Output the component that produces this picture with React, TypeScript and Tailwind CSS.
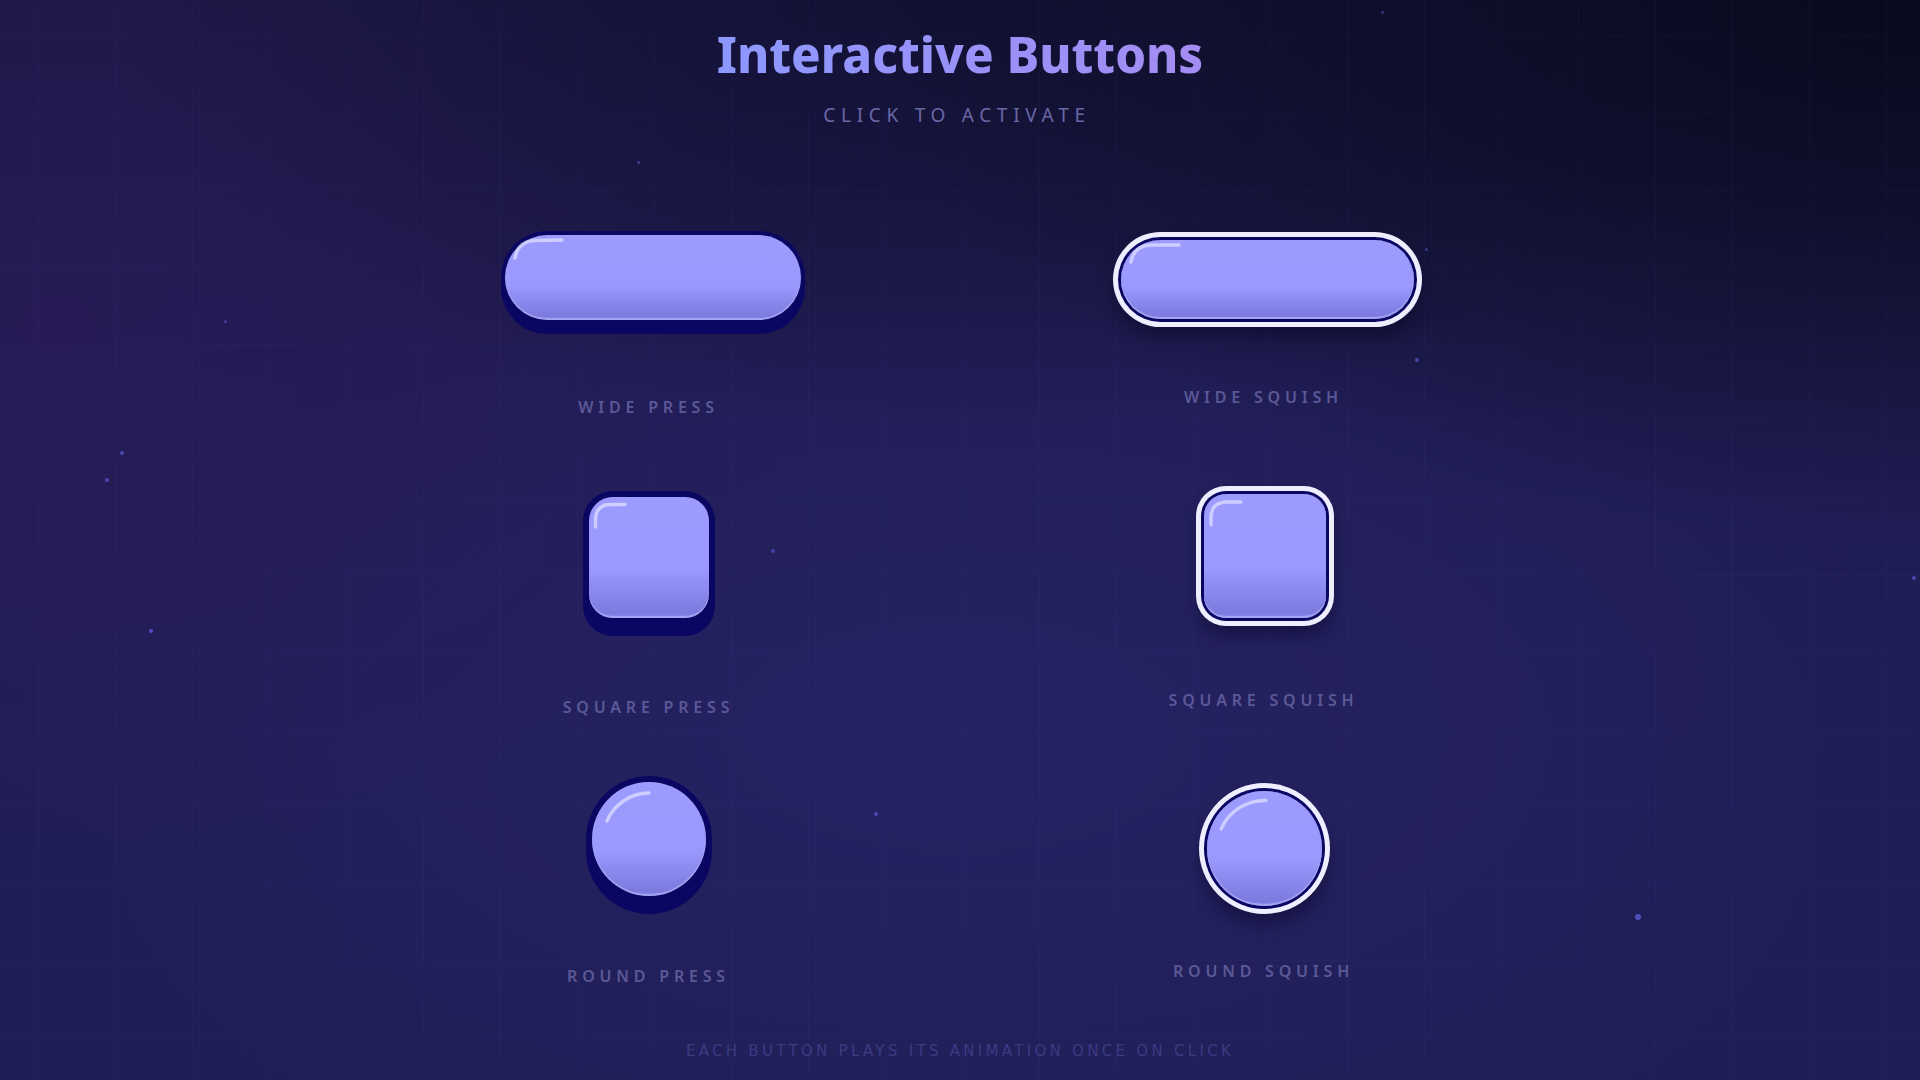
import React from "react";

type Cell = {
  label: string;
  face: string;
  shadow: string;
  top: string;
  gap: string;
  shift: string;
  w: number;
  h: number;
  arc: string;
};

// Glossy face fill shared by every button
const FACE =
  "bg-[linear-gradient(180deg,#9c9cff_0%,#9999fe_60%,#8887eb_80%,#7b7adf_96%,#8e8df0_100%)]";

const cells: Cell[] = [
  {
    label: "WIDE PRESS",
    face: "w-[296px] h-[85px] rounded-full",
    shadow:
      "shadow-[inset_0_-2px_0_rgba(200,200,255,0.45),0_0_0_4px_#0a0763,0_10px_0_4px_#0a0763]",
    top: "mt-[36px]",
    gap: "mt-[79px]",
    shift: "",
    w: 296,
    h: 85,
    arc: "M10 23 Q13 6 30 5.5 L57 5",
  },
  {
    label: "WIDE SQUISH",
    face: "w-[293px] h-[79px] rounded-full",
    shadow:
      "shadow-[inset_0_-2px_0_rgba(200,200,255,0.45),0_0_0_3px_#0a0763,0_0_0_8px_#eeeeff,0_12px_16px_6px_rgba(6,6,35,0.45)]",
    top: "mt-[41px]",
    gap: "mt-[70px]",
    shift: "",
    w: 293,
    h: 79,
    arc: "M10 22 Q13 5.5 30 5 L58 5",
  },
  {
    label: "SQUARE PRESS",
    face: "w-[120px] h-[121px] rounded-[24px]",
    shadow:
      "shadow-[inset_0_-2px_0_rgba(200,200,255,0.45),0_0_0_6px_#0a0763,0_12px_0_6px_#0a0763]",
    top: "mt-[38px]",
    gap: "mt-[81px]",
    shift: "mr-[8px]",
    w: 120,
    h: 121,
    arc: "M6.5 30 L6.5 23 Q6.5 7.5 22 7.5 L36 7.5",
  },
  {
    label: "SQUARE SQUISH",
    face: "w-[122px] h-[124px] rounded-[22px]",
    shadow:
      "shadow-[inset_0_-2px_0_rgba(200,200,255,0.45),0_0_0_3px_#0a0763,0_0_0_8px_#eeeeff,0_12px_16px_6px_rgba(6,6,35,0.45)]",
    top: "mt-[35px]",
    gap: "mt-[74px]",
    shift: "mr-[5px]",
    w: 122,
    h: 124,
    arc: "M7 31 L7 24 Q7 8 23 8 L37 8",
  },
  {
    label: "ROUND PRESS",
    face: "w-[114px] h-[114px] rounded-full",
    shadow:
      "shadow-[inset_0_-2px_0_rgba(200,200,255,0.45),0_0_0_6px_#0a0763,0_12px_0_6px_#0a0763]",
    top: "mt-[43px]",
    gap: "mt-[72px]",
    shift: "mr-[8px]",
    w: 114,
    h: 114,
    arc: "M15 39 A46 46 0 0 1 57 11",
  },
  {
    label: "ROUND SQUISH",
    face: "w-[115px] h-[115px] rounded-full",
    shadow:
      "shadow-[inset_0_-2px_0_rgba(200,200,255,0.45),0_0_0_3px_#0a0763,0_0_0_8px_#eeeeff,0_12px_16px_6px_rgba(6,6,35,0.45)]",
    top: "mt-[52px]",
    gap: "mt-[57px]",
    shift: "mr-[7px]",
    w: 115,
    h: 115,
    arc: "M14 38 A48 48 0 0 1 59 9.5",
  },
];

// Faint dots scattered over the backdrop
const stars = [
  "left-[637px] top-[161px] w-[3px] h-[3px] opacity-60",
  "left-[224px] top-[320px] w-[3px] h-[3px] opacity-60",
  "left-[120px] top-[451px] w-[4px] h-[4px] opacity-70",
  "left-[105px] top-[478px] w-[4px] h-[4px] opacity-70",
  "left-[149px] top-[629px] w-[4px] h-[4px] opacity-80",
  "left-[771px] top-[549px] w-[4px] h-[4px] opacity-60",
  "left-[874px] top-[812px] w-[4px] h-[4px] opacity-70",
  "left-[1415px] top-[358px] w-[4px] h-[4px] opacity-70",
  "left-[1425px] top-[248px] w-[3px] h-[3px] opacity-50",
  "left-[1912px] top-[576px] w-[4px] h-[4px] opacity-70",
  "left-[1635px] top-[914px] w-[6px] h-[6px] opacity-80",
  "left-[1381px] top-[11px] w-[3px] h-[3px] opacity-50",
];

function GlossButton({ c }: { c: Cell }) {
  return (
    <button
      type="button"
      className={`relative block ${c.top} ${c.shift} ${c.face} ${c.shadow} ${FACE} cursor-pointer outline-none`}
    >
      <svg
        className="pointer-events-none absolute left-0 top-0 overflow-visible"
        width={c.w}
        height={c.h}
        viewBox={`0 0 ${c.w} ${c.h}`}
        fill="none"
      >
        <path
          d={c.arc}
          stroke="rgba(255,255,255,0.5)"
          strokeWidth={3.4}
          strokeLinecap="round"
        />
      </svg>
    </button>
  );
}

export default function App() {
  return (
    <div className="relative h-[1080px] w-full overflow-hidden bg-[radial-gradient(55%_50%_at_100%_0%,#070a1c_0%,rgba(7,10,28,0.6)_45%,transparent_100%),radial-gradient(45%_40%_at_50%_0%,rgba(10,10,35,0.55),transparent),radial-gradient(40%_50%_at_3%_30%,rgba(48,26,88,0.5),transparent),radial-gradient(50%_45%_at_50%_68%,rgba(42,38,110,0.55),transparent),linear-gradient(180deg,#1b1846_0%,#201d55_40%,#201e56_100%)] font-['Noto_Sans',sans-serif]">
      {/* fine grid over the backdrop */}
      <div className="pointer-events-none absolute inset-0 bg-[linear-gradient(rgba(130,130,255,0.035)_1px,transparent_1px),linear-gradient(90deg,rgba(130,130,255,0.035)_1px,transparent_1px)] bg-[size:77px_77px] bg-[position:38px_36px]" />
      {stars.map((s, i) => (
        <span
          key={i}
          className={`pointer-events-none absolute rounded-full bg-[#5a5ad6] blur-[0.6px] ${s}`}
        />
      ))}

      <div className="relative flex flex-col items-center pt-[30px]">
        <h1 className="bg-[linear-gradient(90deg,#8c98ff,#a48cf2)] bg-clip-text text-[49px] font-extrabold leading-none text-transparent">
          Interactive Buttons
        </h1>
        <p className="mt-[27px] mr-[6px] text-[19px] leading-none tracking-[0.3em] text-[#6b67a6]">
          CLICK TO ACTIVATE
        </p>

        <div className="mt-[74px] grid grid-cols-[300px_300px] grid-rows-[260px_280px_300px] items-start justify-center gap-x-[315px]">
          {cells.map((c) => (
            <div key={c.label} className="flex flex-col items-center">
              <GlossButton c={c} />
              <span
                className={`${c.gap} mr-[8px] text-[16px] font-semibold leading-none tracking-[0.3em] text-[#5b5897]`}
              >
                {c.label}
              </span>
            </div>
          ))}
        </div>

        <p className="mt-[5px] font-['DejaVu_Sans',sans-serif] text-[15px] leading-none tracking-[0.22em] text-[#3c3a82]">
          EACH BUTTON PLAYS ITS ANIMATION ONCE ON CLICK
        </p>
      </div>
    </div>
  );
}
